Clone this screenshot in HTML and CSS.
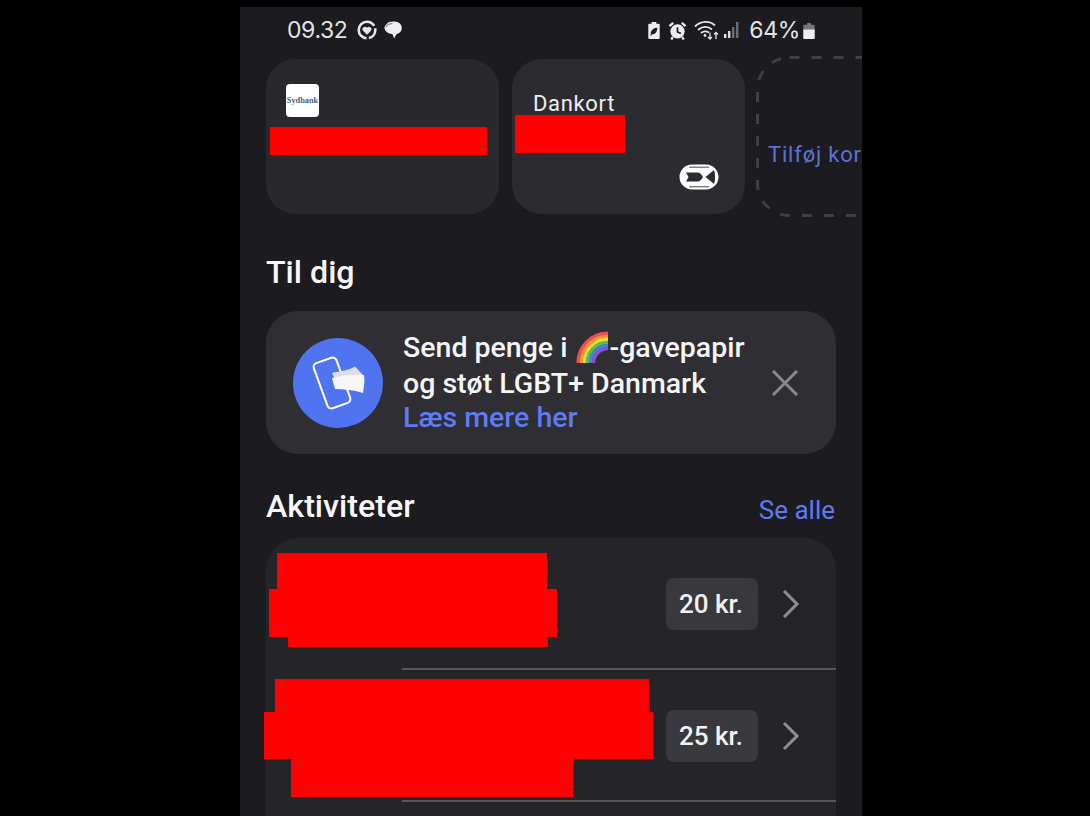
FILE: index.html
```html
<!DOCTYPE html>
<html lang="da">
<head>
<meta charset="utf-8">
<title>Wallet</title>
<link rel="stylesheet" href="styles.css">
</head>
<body>
<main class="phone">
  <header class="status">
    <div class="status-left">
      <span class="time">09.32</span>
      <svg class="ic-ring" viewBox="0 0 20 20"><circle cx="10" cy="10" r="8.300" fill="none" stroke="#e8e8e8" stroke-width="2.600" stroke-dasharray="11 2.500 34 2.500"/><path d="M10 14.800 6 10.800a2.500 2.500 0 0 1 4-3 2.500 2.500 0 0 1 4 3z" fill="#e8e8e8"/></svg>
      <svg class="ic-chat" viewBox="2 2 17 17"><path d="M4.500 4.800C6 3 9 2.300 12 2.500c3.800.2 6.800 2.500 6.800 6 0 3-2 5-4.800 5.700L11.500 18.500 10 14.500C6 14 3 12 2.500 9.200c-.2-1.800.8-3.200 2-4.400z" fill="#f0f0f0"/><path d="M4 8c.5-2 3-3.500 6-3.500" fill="none" stroke="#8b8b8f" stroke-width="1"/></svg>
    </div>
    <div class="status-right">
      <svg class="ic-batt-saver" viewBox="0 0 14 20"><path d="M4.500 1h5v2H12a1 1 0 0 1 1 1v14a1 1 0 0 1-1 1H2a1 1 0 0 1-1-1V4a1 1 0 0 1 1-1h2.500z" fill="#eee"/><path d="M3.500 14c0-4.500 3-7 7-7 0 4.500-2.500 7-5.500 7L3.500 16z" fill="#1c1c21"/></svg>
      <svg class="ic-alarm" viewBox="0 0 20 20"><circle cx="10" cy="11" r="7.500" fill="#eee"/><path d="M10 6.500v5l3.500 1.500" fill="none" stroke="#1c1c21" stroke-width="1.800"/><path d="M1.500 5.500 5.500 2M18.500 5.500 14.500 2M5 17l-1.500 2.500M15 17l1.500 2.500" stroke="#eee" stroke-width="2.400" fill="none"/></svg>
      <svg class="ic-wifi" viewBox="0 0 26 20"><g fill="none" stroke="#e6e6e6" stroke-width="1.800"><path d="M1 6.500C7 .5 16 .5 21 5.500"/><path d="M4 10c4-4 10-4 14-.5"/><path d="M7 13c2.500-2 5.500-2 8-.5"/></g><circle cx="11" cy="15.500" r="1.400" fill="#e6e6e6"/><path d="M16 12.500v6.500M14 17l2 2 2-2M22 19v-6.500M20 14.500l2-2 2 2" stroke="#e6e6e6" stroke-width="1.300" fill="none"/></svg>
      <svg class="ic-signal" viewBox="0 0 16 18"><rect x="0" y="13" width="2.400" height="4" fill="#e6e6e6"/><rect x="4" y="10" width="2.400" height="7" fill="#dcdcdc"/><rect x="8" y="6" width="2.400" height="11" fill="#6c6c70"/><rect x="12" y="1" width="2.400" height="16" fill="#6c6c70"/></svg>
      <span class="pct">64%</span>
      <svg class="ic-batt" viewBox="0 0 12 18"><path d="M4 1h4v2h3a1 1 0 0 1 1 1v13a1 1 0 0 1-1 1H1a1 1 0 0 1-1-1V4a1 1 0 0 1 1-1h3z" fill="#77777b"/><path d="M0 8h12v9a1 1 0 0 1-1 1H1a1 1 0 0 1-1-1z" fill="#eee"/></svg>
    </div>
  </header>

  <section class="cards">
    <article class="card card-first">
      <div class="logo">Sydbank</div>
      <div class="redact r-card1"></div>
    </article>
    <article class="card">
      <div class="card-name">Dankort</div>
      <div class="redact r-card2"></div>
      <svg class="dk" viewBox="0 0 40 26"><rect x="0.500" y="0.500" width="39" height="25" rx="12.500" fill="#fff"/><path d="M10 3.200H30M10 22.800H30" stroke="#4a4a4e" stroke-width="1" fill="none"/><path d="M7 8.500h11.500c2.500 0 4 2 5.500 4.500-1.500 2.500-3 4.500-5.500 4.500H7l2.500-4.500z" fill="#2c2c30"/><path d="M35 6 26.500 13 35 20c1.500-4.500 1.500-9.500 0-14z" fill="#2c2c30"/></svg>
    </article>
    <article class="add-card">
      <svg class="add-dash" width="120" height="161" viewBox="0 0 120 161"><rect x="1.500" y="1.500" width="220" height="158" rx="32" fill="none" stroke="#3f3f44" stroke-width="3" stroke-dasharray="10 12"/></svg>
      <span class="add-label">Tilføj kort</span>
    </article>
  </section>

  <h2 class="title title-dig">Til dig</h2>

  <section class="promo">
    <div class="promo-icon">
      <svg viewBox="0 0 90 90" width="90" height="90"><rect x="27" y="21" width="24" height="48" rx="4" transform="rotate(-20 39 45)" fill="none" stroke="#fff" stroke-width="2"/><path d="M39 35C47 33 54 33 62 28.500L70 37 68 45 44 46z" fill="#dcdfe8"/><path d="M39 40C49 37 60 36 71 37 72 43 71 49 70 55 60 52 51 51 42 51z" fill="#f6f6f6"/></svg>
    </div>
    <div class="promo-text">
      <div class="promo-line">Send penge i <svg class="rainbow" viewBox="0 0 32 32"><g fill="none" stroke-width="3.300"><path d="M2 32A29 29 0 0 1 31 3" stroke="#ef4a58"/><path d="M5 32A26 26 0 0 1 31 6" stroke="#f9902c"/><path d="M8 32A23 23 0 0 1 31 9" stroke="#fcd93c"/><path d="M11 32A20 20 0 0 1 31 12" stroke="#5bbd4b"/><path d="M14 32A17 17 0 0 1 31 15" stroke="#3f84e0"/><path d="M17 32A14 14 0 0 1 31 18" stroke="#8c4fc4"/></g></svg>-gavepapir</div>
      <div class="promo-line">og støt LGBT+ Danmark</div>
      <div class="promo-link">Læs mere her</div>
    </div>
    <svg class="close" viewBox="0 0 28 28"><path d="M2 2 26 26M26 2 2 26" stroke="#8a8a8e" stroke-width="3" fill="none"/></svg>
  </section>

  <div class="act-head">
    <h2 class="title">Aktiviteter</h2>
    <span class="see-all">Se alle</span>
  </div>

  <section class="list">
    <div class="row">
      <div class="amount">20 kr.</div>
      <svg class="chev" viewBox="0 0 18 30"><path d="M2 2 15 15 2 28" stroke="#8e8e92" stroke-width="3" fill="none"/></svg>
      <div class="redact r1a"></div><div class="redact r1b"></div><div class="redact r1c"></div>
    </div>
    <div class="row">
      <div class="amount">25 kr.</div>
      <svg class="chev" viewBox="0 0 18 30"><path d="M2 2 15 15 2 28" stroke="#8e8e92" stroke-width="3" fill="none"/></svg>
      <div class="redact r2a"></div><div class="redact r2b"></div><div class="redact r2c"></div>
    </div>
  </section>
</main>
</body>
</html>
```
FILE: styles.css
```css
* { box-sizing: border-box; }
html, body { margin: 0; height: 816px; overflow: hidden; background: #000; }
body { padding: 7px 228px 0 240px; font-family: Roboto, "Liberation Sans", sans-serif; color: #f4f4f4; }

.phone { width: 622px; height: 809px; background: #1b1b20; overflow: hidden; padding-left: 26px; }

.status { height: 52px; display: flex; align-items: center; justify-content: space-between; padding: 0 47px 6px 21px; }
.status-left, .status-right { display: flex; align-items: center; }
.time { font-family: Inter, Roboto, sans-serif; font-size: 23px; color: #e4e4e4; margin-right: 10px; letter-spacing: -.4px; }
.ic-ring { width: 20px; height: 20px; margin-right: 7px; }
.ic-chat { width: 18px; height: 18px; }
.ic-batt-saver { width: 14px; height: 19px; margin-right: 7px; }
.ic-alarm { width: 19px; height: 19px; margin-right: 7px; }
.ic-wifi { width: 26px; height: 20px; margin-right: 4px; }
.ic-signal { width: 16px; height: 18px; margin-right: 9px; }
.pct { font-family: Inter, Roboto, sans-serif; font-size: 23px; color: #e4e4e4; margin-right: 3px; letter-spacing: -.3px; }
.ic-batt { width: 12px; height: 17px; }

.cards { display: flex; gap: 13px; height: 155px; }
.card { position: relative; flex: 0 0 233px; background: #2c2c30; border-radius: 30px; }
.card-first { background: #29292d; }
.logo { position: absolute; left: 20px; top: 25px; width: 33px; height: 33px; background: #fff; border-radius: 4px; font-family: "Liberation Serif", serif; font-weight: 700; font-size: 8.300px; line-height: 33px; color: #3f6585; display: flex; justify-content: center; overflow: hidden; }
.card-name { position: absolute; left: 21px; top: 32px; font-size: 22px; color: #eee; letter-spacing: .65px; }
.dk { position: absolute; left: 167px; top: 105px; width: 40px; height: 26px; }
.add-card { position: relative; flex: 0 0 240px; height: 161px; margin: -3px 0 0 -2px; display: flex; align-items: center; padding: 36px 0 0 12px; }
.add-dash { position: absolute; left: 0; top: 0; }
.add-label { font-size: 22px; color: #5a72d8; white-space: nowrap; letter-spacing: .8px; }

.redact { position: absolute; background: #f00; }
.r-card1 { left: 4px; top: 68px; width: 217px; height: 28px; }
.r-card2 { left: 3px; top: 56px; width: 110px; height: 38px; }

.title { margin: 0; font-size: 32.200px; font-weight: 500; line-height: 38px; color: #f7f7f7; }
.title-dig { margin-top: 39px; }

.promo { margin-top: 20px; width: 570px; height: 143px; background: #2e2e33; border-radius: 32px; display: flex; align-items: center; padding-left: 27px; }
.promo-icon { width: 90px; height: 90px; border-radius: 50%; background: #5073f0; flex: none; }
.promo-icon svg { display: block; }
.promo-text { margin: -1px 0 0 20px; width: 364px; font-size: 28.500px; font-weight: 500; line-height: 36px; color: #f5f5f5; white-space: nowrap; }
.promo-line { display: flex; align-items: center; white-space: pre; }
.promo-link { color: #5f7bf0; line-height: 32px; }
.rainbow { width: 35px; height: 33px; margin-top: -3px; }
.close { width: 28px; height: 28px; flex: none; margin-left: 4px; }

.act-head { margin-top: 33px; width: 570px; display: flex; justify-content: space-between; align-items: flex-start; }
.see-all { font-size: 26px; color: #5f7bf0; line-height: 38px; margin-top: 4px; margin-right: 1px; }

.list { margin-top: 9px; width: 570px; height: 300px; background: #242429; border-radius: 32px 32px 0 0; }
.row { position: relative; height: 132px; display: flex; align-items: center; padding: 2px 0 0 400px; border-bottom: 2px solid #55555a; }
.row::after { content: ""; position: absolute; left: 0; bottom: -2px; width: 136px; height: 2px; background: #242429; }
.amount { width: 92px; height: 52px; padding-right: 2px; background: #38383d; border-radius: 7px; text-align: center; line-height: 52px; font-size: 26px; font-weight: 500; color: #f2f2f2; }
.chev { width: 18px; height: 30px; margin-left: 24px; }

.r1a { left: 11px; top: 15px; width: 270px; height: 40px; }
.r1b { left: 3px; top: 51px; width: 288px; height: 48px; }
.r1c { left: 22px; top: 95px; width: 260px; height: 14px; }
.r2a { left: 9px; top: 9px; width: 374px; height: 36px; }
.r2b { left: -2px; top: 42px; width: 389px; height: 47px; }
.r2c { left: 25px; top: 85px; width: 282px; height: 42px; }
```
